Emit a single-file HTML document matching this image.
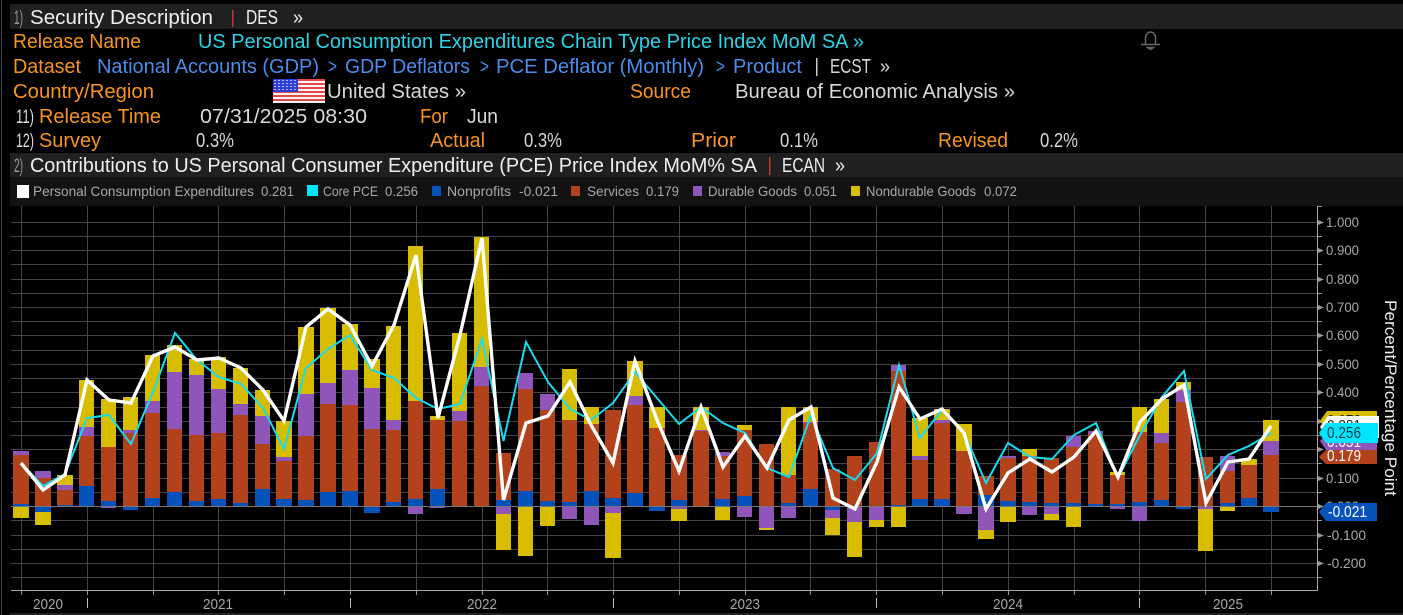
<!DOCTYPE html>
<html><head><meta charset="utf-8"><title>Security Description</title>
<style>
html,body{margin:0;padding:0;background:#000;width:1403px;height:615px;overflow:hidden}
svg{display:block}
text{font-family:"Liberation Sans",sans-serif;white-space:pre}
.h{font-size:20px;fill:#efefef}
.o{font-size:20px;fill:#f7931e}
.c{font-size:20px;fill:#2ad4e8}
.b{font-size:20px;fill:#4a8cec}
.w{font-size:20px;fill:#d8d8d8}
.n{font-size:19px;fill:#b0b0b0}
.l{font-size:14px;fill:#a8a8a8}
.a{font-size:14px;fill:#a8a8a8}
.y{font-size:15px;fill:#a8a8a8}
.t{font-size:15.5px;fill:#fff}
</style></head><body>
<svg width="1403" height="615" viewBox="0 0 1403 615" xmlns="http://www.w3.org/2000/svg">
<defs><pattern id="st" x="273" y="79" width="4" height="3" patternUnits="userSpaceOnUse"><rect width="4" height="3" fill="#2f3fd8"/><rect x="1" y="1" width="2" height="1" fill="#b8bef5"/></pattern></defs>
<rect width="1403" height="615" fill="#000"/>
<rect x="1" y="0" width="1" height="615" fill="#444"/>
<rect x="10" y="4" width="1393" height="25" fill="#202020"/>
<rect x="10" y="153" width="1393" height="24" fill="#202020"/>
<rect x="10" y="177" width="1393" height="29" fill="#121212"/>
<rect x="10" y="613" width="1393" height="2" fill="#222"/>

<text class="n" x="14" y="24" textLength="9" lengthAdjust="spacingAndGlyphs" style="fill:#999">1)</text>
<text class="h" x="30" y="24" textLength="183" lengthAdjust="spacingAndGlyphs">Security Description</text>
<rect x="232" y="10" width="1.5" height="17" fill="#c0392b"/>
<text class="h" x="246" y="24" textLength="32" lengthAdjust="spacingAndGlyphs">DES</text>
<text class="h" x="293" y="24" textLength="10" lengthAdjust="spacingAndGlyphs">»</text>

<text class="o" x="13" y="48" textLength="128" lengthAdjust="spacingAndGlyphs">Release Name</text>
<text class="c" x="198" y="48" textLength="666" lengthAdjust="spacingAndGlyphs">US Personal Consumption Expenditures Chain Type Price Index MoM SA »</text>
<path d="M1145.5 44V38a5 6 0 0 1 10 0V44M1141 44.5H1160M1147.5 47.5h6l-3 2z" fill="none" stroke="#666" stroke-width="1.5"/>

<text class="o" x="13" y="73" textLength="68" lengthAdjust="spacingAndGlyphs">Dataset</text>
<text class="b" x="97" y="73" textLength="222" lengthAdjust="spacingAndGlyphs">National Accounts (GDP)</text>
<text class="b" x="328" y="73" textLength="9" lengthAdjust="spacingAndGlyphs">&gt;</text>
<text class="b" x="345" y="73" textLength="125" lengthAdjust="spacingAndGlyphs">GDP Deflators</text>
<text class="b" x="480" y="73" textLength="9" lengthAdjust="spacingAndGlyphs">&gt;</text>
<text class="b" x="496" y="73" textLength="208" lengthAdjust="spacingAndGlyphs">PCE Deflator (Monthly)</text>
<text class="b" x="716" y="73" textLength="9" lengthAdjust="spacingAndGlyphs">&gt;</text>
<text class="b" x="733" y="73" textLength="69" lengthAdjust="spacingAndGlyphs">Product</text>
<rect x="816" y="58" width="1.5" height="18" fill="#ccc"/>
<text class="w" x="830" y="73" textLength="41" lengthAdjust="spacingAndGlyphs">ECST</text>
<text class="w" x="880" y="73" textLength="10" lengthAdjust="spacingAndGlyphs">»</text>

<text class="o" x="13" y="98" textLength="141" lengthAdjust="spacingAndGlyphs">Country/Region</text>
<g>
<rect x="273" y="79" width="52" height="24" fill="#f4f4f4"/>
<path d="M273 79h52v2H273zM273 83h52v2H273zM273 87h52v2H273zM273 91h52v2H273zM273 95h52v2H273zM273 99h52v2H273z" fill="#e8474a"/>
<rect x="273" y="79" width="25" height="13" fill="url(#st)"/>
</g>
<text class="w" x="327" y="98" textLength="139" lengthAdjust="spacingAndGlyphs">United States »</text>
<text class="o" x="630" y="98" textLength="61" lengthAdjust="spacingAndGlyphs">Source</text>
<text class="w" x="735" y="98" textLength="280" lengthAdjust="spacingAndGlyphs">Bureau of Economic Analysis »</text>

<text class="n" x="16" y="123" textLength="18" lengthAdjust="spacingAndGlyphs" style="fill:#ddd">11)</text>
<text class="o" x="39" y="123" textLength="122" lengthAdjust="spacingAndGlyphs">Release Time</text>
<text class="w" x="200" y="123" textLength="167" lengthAdjust="spacingAndGlyphs">07/31/2025 08:30</text>
<text class="o" x="420" y="123" textLength="28" lengthAdjust="spacingAndGlyphs">For</text>
<text class="w" x="467" y="123" textLength="31" lengthAdjust="spacingAndGlyphs">Jun</text>

<text class="n" x="16" y="147" textLength="18" lengthAdjust="spacingAndGlyphs" style="fill:#ddd">12)</text>
<text class="o" x="39" y="147" textLength="62" lengthAdjust="spacingAndGlyphs">Survey</text>
<text class="w" x="196" y="147" textLength="38" lengthAdjust="spacingAndGlyphs">0.3%</text>
<text class="o" x="430" y="147" textLength="55" lengthAdjust="spacingAndGlyphs">Actual</text>
<text class="w" x="524" y="147" textLength="38" lengthAdjust="spacingAndGlyphs">0.3%</text>
<text class="o" x="691" y="147" textLength="45" lengthAdjust="spacingAndGlyphs">Prior</text>
<text class="w" x="780" y="147" textLength="38" lengthAdjust="spacingAndGlyphs">0.1%</text>
<text class="o" x="938" y="147" textLength="70" lengthAdjust="spacingAndGlyphs">Revised</text>
<text class="w" x="1040" y="147" textLength="38" lengthAdjust="spacingAndGlyphs">0.2%</text>

<text class="n" x="14" y="172" textLength="9" lengthAdjust="spacingAndGlyphs" style="fill:#999">2)</text>
<text class="h" x="30" y="172" textLength="727" lengthAdjust="spacingAndGlyphs">Contributions to US Personal Consumer Expenditure (PCE) Price Index MoM% SA</text>
<rect x="769" y="157" width="1.5" height="18" fill="#c0392b"/>
<text class="h" x="782" y="172" textLength="43" lengthAdjust="spacingAndGlyphs">ECAN</text>
<text class="h" x="835" y="172" textLength="10" lengthAdjust="spacingAndGlyphs">»</text>

<rect x="17" y="185" width="12" height="13" fill="#fff"/>
<text class="l" x="33" y="196" textLength="221" lengthAdjust="spacingAndGlyphs">Personal Consumption Expenditures</text>
<text class="l" x="261" y="196" textLength="33" lengthAdjust="spacingAndGlyphs">0.281</text>
<rect x="307" y="185" width="11" height="11" fill="#00e5ff"/>
<text class="l" x="323" y="196" textLength="55" lengthAdjust="spacingAndGlyphs">Core PCE</text>
<text class="l" x="385" y="196" textLength="33" lengthAdjust="spacingAndGlyphs">0.256</text>
<rect x="432" y="186" width="9" height="10" fill="#0552bb"/>
<text class="l" x="447" y="196" textLength="64" lengthAdjust="spacingAndGlyphs">Nonprofits</text>
<text class="l" x="519" y="196" textLength="39" lengthAdjust="spacingAndGlyphs">-0.021</text>
<rect x="571" y="186" width="9" height="10" fill="#b1421c"/>
<text class="l" x="587" y="196" textLength="52" lengthAdjust="spacingAndGlyphs">Services</text>
<text class="l" x="646" y="196" textLength="33" lengthAdjust="spacingAndGlyphs">0.179</text>
<rect x="693" y="186" width="9" height="10" fill="#9055b8"/>
<text class="l" x="708" y="196" textLength="89" lengthAdjust="spacingAndGlyphs">Durable Goods</text>
<text class="l" x="804" y="196" textLength="33" lengthAdjust="spacingAndGlyphs">0.051</text>
<rect x="851" y="186" width="9" height="10" fill="#d8bc00"/>
<text class="l" x="866" y="196" textLength="110" lengthAdjust="spacingAndGlyphs">Nondurable Goods</text>
<text class="l" x="984" y="196" textLength="33" lengthAdjust="spacingAndGlyphs">0.072</text>

<path stroke="#444" stroke-width="1" fill="none" d="M11 222.5H1317M11 236.5H1317M11 250.5H1317M11 264.5H1317M11 279.5H1317M11 293.5H1317M11 307.5H1317M11 321.5H1317M11 335.5H1317M11 350.5H1317M11 364.5H1317M11 378.5H1317M11 392.5H1317M11 407.5H1317M11 421.5H1317M11 435.5H1317M11 449.5H1317M11 463.5H1317M11 478.5H1317M11 492.5H1317M11 520.5H1317M11 535.5H1317M11 549.5H1317M11 563.5H1317M11 577.5H1317
M21.5 206V590M87.5 206V590M153.5 206V590M218.5 206V590M284.5 206V590M350.5 206V590M416.5 206V590M482.5 206V590M547.5 206V590M613.5 206V590M679.5 206V590M745.5 206V590M810.5 206V590M876.5 206V590M942.5 206V590M1008.5 206V590M1074.5 206V590M1139.5 206V590M1205.5 206V590M1271.5 206V590"/>

<path fill="#b1421c" d="M13 455h16V504H13zM35 478h16V506H35zM57 490h16V505H57zM79 436h15V486H79zM101 447h15V501H101zM123 433h15V506H123zM145 413h15V498H145zM167 429h15V492H167zM189 435h15V501H189zM211 433h15V499H211zM233 415h15V503H233zM255 444h15V489H255zM276 461h16V499H276zM298 436h16V500H298zM320 404h16V492H320zM342 405h16V491H342zM364 429h16V506H364zM386 430h15V502H386zM408 401h15V499H408zM430 420h15V489H430zM452 421h15V506H452zM474 386h15V506H474zM496 453h15V500H496zM518 389h15V491H518zM540 410h15V501H540zM562 420h15V502H562zM584 424h15V491H584zM605 410h16V498H605zM627 405h16V493H627zM649 428h16V506H649zM671 455h16V500H671zM693 431h16V506H693zM715 456h15V499H715zM737 430h15V496H737zM759 444h15V506H759zM781 475h15V503H781zM803 423h15V489H803zM825 469h15V506H825zM847 456h15V506H847zM869 442h15V506H869zM891 371h15V505H891zM912 460h16V499H912zM934 423h16V499H934zM956 451h16V506H956zM978 476h16V495H978zM1000 458h16V501H1000zM1022 456h15V502H1022zM1044 458h15V503H1044zM1066 447h15V503H1066zM1088 434h15V504H1088zM1110 475h15V504H1110zM1132 432h15V502H1132zM1154 443h15V500H1154zM1176 402h15V506H1176zM1198 457h15V506H1198zM1220 471h15V503H1220zM1241 465h16V498H1241zM1263 455h16V506H1263z"/>

<path fill="#d8bc00" d="M13 507h16V518H13zM35 512h16V525H35zM57 475h16V485H57zM79 380h15V427H79zM101 399h15V447H101zM123 397h15V430H123zM145 355h15V401H145zM167 345h15V372H167zM189 359h15V375H189zM211 357h15V389H211zM233 368h15V404H233zM255 390h15V416H255zM276 421h16V457H276zM298 327h16V394H298zM320 308h16V383H320zM342 324h16V370H342zM364 359h16V388H364zM386 326h15V420H386zM408 246h15V401H408zM430 416h15V420H430zM452 333h15V411H452zM474 237h15V367H474zM496 514h15V550H496zM518 507h15V556H518zM540 507h15V526H540zM562 369h15V420H562zM584 407h15V424H584zM605 513h16V558H605zM627 361h16V396H627zM649 407h16V428H649zM671 509h16V521H671zM693 407h16V431H693zM715 507h15V520H715zM737 425h15V430H737zM759 528h15V530H759zM781 407h15V475H781zM803 407h15V422H803zM825 518h15V535H825zM847 522h15V557H847zM869 520h15V527H869zM891 507h15V527H891zM912 418h16V456H912zM934 409h16V420H934zM956 424h16V451H956zM978 530h16V539H978zM1000 507h16V522H1000zM1022 449h15V456H1022zM1044 514h15V520H1044zM1066 507h15V527H1066zM1110 472h15V475H1110zM1132 407h15V432H1132zM1154 399h15V433H1154zM1176 382h15V390H1176zM1198 509h15V551H1198zM1220 507h15V511H1220zM1241 459h16V465H1241zM1263 420h16V441H1263z"/>

<path fill="#9055b8" d="M13 451h16V455H13zM35 471h16V478H35zM57 485h16V490H57zM79 427h15V436H79zM101 506h15V508H101zM123 430h15V433H123zM145 401h15V413H145zM167 372h15V429H167zM189 375h15V435H189zM211 389h15V433H211zM233 404h15V415H233zM255 416h15V444H255zM276 457h16V461H276zM298 394h16V436H298zM320 383h16V404H320zM342 370h16V405H342zM364 388h16V429H364zM386 420h15V430H386zM408 507h15V514H408zM430 506h15V508H430zM452 411h15V421H452zM474 367h15V386H474zM496 507h15V514H496zM518 373h15V389H518zM540 394h15V410H540zM562 507h15V519H562zM584 507h15V525H584zM605 507h16V513H605zM627 396h16V405H627zM671 507h16V509H671zM693 430h16V431H693zM715 452h15V456H715zM737 507h15V517H737zM759 507h15V528H759zM781 507h15V518H781zM803 422h15V423H803zM825 510h15V518H825zM847 507h15V522H847zM869 507h15V520H869zM891 365h15V371H891zM912 456h16V460H912zM934 420h16V423H934zM956 507h16V514H956zM978 507h16V530H978zM1000 456h16V458H1000zM1022 507h15V515H1022zM1044 507h15V514H1044zM1066 436h15V447H1066zM1088 431h15V434H1088zM1110 507h15V509H1110zM1132 507h15V521H1132zM1154 433h15V443H1154zM1176 390h15V402H1176zM1198 507h15V509H1198zM1220 456h15V471H1220zM1263 441h16V455H1263z"/>

<path fill="#0552bb" d="M13 504h16V507H13zM35 506h16V512H35zM57 505h16V506H57zM79 486h15V506H79zM101 501h15V506H101zM123 506h15V510H123zM145 498h15V506H145zM167 492h15V506H167zM189 501h15V506H189zM211 499h15V506H211zM233 503h15V506H233zM255 489h15V506H255zM276 499h16V506H276zM298 500h16V506H298zM320 492h16V506H320zM342 491h16V506H342zM364 506h16V513H364zM386 502h15V506H386zM408 499h15V506H408zM430 489h15V506H430zM496 500h15V506H496zM518 491h15V506H518zM540 501h15V506H540zM562 502h15V506H562zM584 491h15V506H584zM605 498h16V506H605zM627 493h16V506H627zM649 507h16V511H649zM671 500h16V506H671zM715 499h15V506H715zM737 496h15V506H737zM781 503h15V506H781zM803 489h15V506H803zM825 507h15V510H825zM891 505h15V506H891zM912 499h16V506H912zM934 499h16V506H934zM978 495h16V506H978zM1000 501h16V506H1000zM1022 502h15V506H1022zM1044 503h15V506H1044zM1066 503h15V506H1066zM1088 504h15V506H1088zM1110 504h15V506H1110zM1132 502h15V506H1132zM1154 500h15V506H1154zM1176 507h15V509H1176zM1220 503h15V506H1220zM1241 498h16V506H1241zM1263 507h16V512H1263z"/>

<rect x="11" y="506" width="1306" height="1" fill="#777"/>

<polyline fill="none" stroke="#16dcf0" stroke-width="2" stroke-linejoin="miter" points="21,463 43,486 65,474 87,418 109,415 131,444 153,392 175,333 197,360 219,377 241,384 263,408 284,449 306,368 328,349 350,335 372,370 394,378 416,398 438,409 460,404 482,339 503.5,441 526,342 548,382 570,409 591,420 613,403 635,372 657,398 679,424 701,407 723,423 745,433 767,468 789,477 811,415 833,468 855,480 877,453 899,365 920,438 942,410 964,433 986,483 1008,443 1030,457 1052,459 1074,435 1096,423 1118,478 1140,435 1162,397 1184,371 1206,479 1228,455 1249,446 1271,433"/>
<polyline fill="none" stroke="#fff" stroke-width="3.4" stroke-linejoin="miter" points="21,463 43,490 65,475 87,380 109,400 131,403 153,356 175,347 197,360 219,358 241,368 263,390 284,421 306,327 328,309 350,325 372,366 394,325 416,255 438,418 460,335 482,238 503.5,500 526,423 548,416 570,382 591,425 613,463 635,361 657,420 679,471 701,407 723,467 745,436 767,468 789,420 811,407 833,498 855,509 877,462 899,387 920,419 942,409 964,433 986,509 1008,473 1030,459 1052,472 1074,457 1096,431 1118,477 1140,422 1162,399 1184,385 1206,503 1228,462 1249,459 1271,426"/>

<rect x="11" y="590" width="1307" height="1" fill="#aaa"/>
<rect x="1317" y="206" width="1" height="385" fill="#aaa"/>
<path stroke="#999" stroke-width="1" fill="none" d="M21.5 591V595M87.5 591V595M153.5 591V595M218.5 591V595M284.5 591V595M350.5 591V595M416.5 591V595M482.5 591V595M547.5 591V595M613.5 591V595M679.5 591V595M745.5 591V595M810.5 591V595M876.5 591V595M942.5 591V595M1008.5 591V595M1074.5 591V595M1139.5 591V595M1205.5 591V595M1271.5 591V595
M1318 206.5H1322M1318 236.5H1322M1318 264.5H1322M1318 293.5H1322M1318 321.5H1322M1318 350.5H1322M1318 378.5H1322M1318 407.5H1322M1318 435.5H1322M1318 463.5H1322M1318 492.5H1322M1318 520.5H1322M1318 549.5H1322M1318 577.5H1322"/>
<path stroke="#bbb" stroke-width="1" fill="none" d="M87.5 598V608M350.5 598V608M613.5 598V608M876.5 598V608M1139.5 598V608"/>
<path fill="#999" d="M1318 220l6 2.5-6 2.5zM1318 248l6 2.5-6 2.5zM1318 277l6 2.5-6 2.5zM1318 305l6 2.5-6 2.5zM1318 333l6 2.5-6 2.5zM1318 362l6 2.5-6 2.5zM1318 390l6 2.5-6 2.5zM1318 419l6 2.5-6 2.5zM1318 447l6 2.5-6 2.5zM1318 476l6 2.5-6 2.5zM1318 504l6 2.5-6 2.5zM1318 533l6 2.5-6 2.5zM1318 561l6 2.5-6 2.5z"/>

<text class="a" x="1326" y="227" textLength="33" lengthAdjust="spacingAndGlyphs">1.000</text>
<text class="a" x="1326" y="255" textLength="33" lengthAdjust="spacingAndGlyphs">0.900</text>
<text class="a" x="1326" y="284" textLength="33" lengthAdjust="spacingAndGlyphs">0.800</text>
<text class="a" x="1326" y="312" textLength="33" lengthAdjust="spacingAndGlyphs">0.700</text>
<text class="a" x="1326" y="340" textLength="33" lengthAdjust="spacingAndGlyphs">0.600</text>
<text class="a" x="1326" y="369" textLength="33" lengthAdjust="spacingAndGlyphs">0.500</text>
<text class="a" x="1326" y="397" textLength="33" lengthAdjust="spacingAndGlyphs">0.400</text>
<text class="a" x="1326" y="483" textLength="33" lengthAdjust="spacingAndGlyphs">0.100</text>
<text class="a" x="1326" y="511" textLength="33" lengthAdjust="spacingAndGlyphs">0.000</text>
<text class="a" x="1327" y="540" textLength="39" lengthAdjust="spacingAndGlyphs">-0.100</text>
<text class="a" x="1327" y="568" textLength="39" lengthAdjust="spacingAndGlyphs">-0.200</text>

<text class="y" x="33" y="609" textLength="30" lengthAdjust="spacingAndGlyphs">2020</text>
<text class="y" x="203" y="609" textLength="30" lengthAdjust="spacingAndGlyphs">2021</text>
<text class="y" x="467" y="609" textLength="30" lengthAdjust="spacingAndGlyphs">2022</text>
<text class="y" x="730" y="609" textLength="30" lengthAdjust="spacingAndGlyphs">2023</text>
<text class="y" x="993" y="609" textLength="30" lengthAdjust="spacingAndGlyphs">2024</text>
<text class="y" x="1213" y="609" textLength="30" lengthAdjust="spacingAndGlyphs">2025</text>

<polygon points="1320,421 1327,411 1377,411 1377,431 1327,431" fill="#d8bc00"/>
<text class="t" x="1327" y="426" textLength="34" lengthAdjust="spacingAndGlyphs" style="fill:#222">0.072</text>
<polygon points="1320,427 1328,416 1379,416 1379,438 1328,438" fill="#fff"/>
<text class="t" x="1327" y="431" textLength="34" lengthAdjust="spacingAndGlyphs" style="fill:#222">0.281</text>
<polygon points="1320,441 1326,434 1377,434 1377,450 1326,450" fill="#9055b8"/>
<text class="t" x="1327" y="447" textLength="34" lengthAdjust="spacingAndGlyphs">0.051</text>
<polygon points="1319,457 1326,450 1377,450 1377,464 1326,464" fill="#b1421c"/>
<text class="t" x="1327" y="461" textLength="34" lengthAdjust="spacingAndGlyphs">0.179</text>
<polygon points="1319,433 1326,423 1378,423 1378,443 1326,443" fill="#00e5ff"/>
<text class="t" x="1327" y="438" textLength="34" lengthAdjust="spacingAndGlyphs" style="fill:#0a3a44">0.256</text>
<polygon points="1319,512 1326,503 1377,503 1377,521 1326,521" fill="#0552bb"/>
<text class="t" x="1328" y="517" textLength="39" lengthAdjust="spacingAndGlyphs">-0.021</text>

<text x="1385" y="300" transform="rotate(90 1385 300)" font-size="17" fill="#eee" textLength="196" lengthAdjust="spacingAndGlyphs">Percent/Percentage Point</text>
</svg>
</body></html>
